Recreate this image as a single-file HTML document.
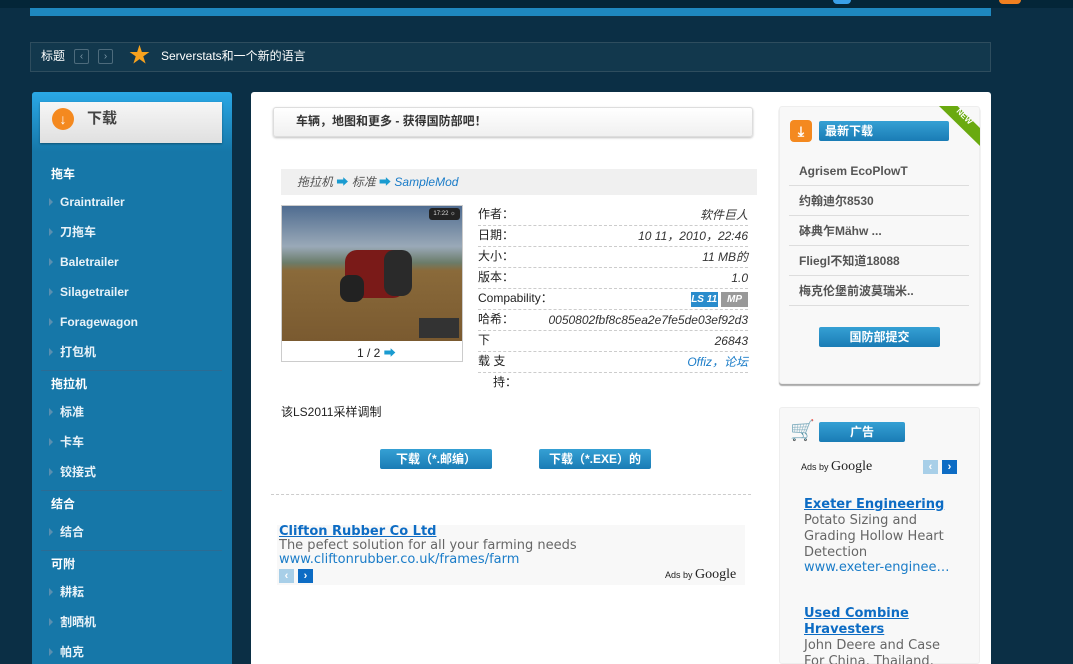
<!DOCTYPE html>
<html><head><meta charset="utf-8"><style>
*{margin:0;padding:0;box-sizing:border-box}
html,body{width:1073px;height:664px;overflow:hidden}
body{background:#0b2f45;font-family:"Liberation Sans","Noto Sans CJK SC",sans-serif;position:relative}
.a{position:absolute}
.mi{position:absolute;left:60px;color:#e8f2f8;font-size:12px;font-weight:bold;line-height:14px}
.mi:before{content:"";position:absolute;left:-11px;top:3px;border-left:4px solid #5a8fb0;border-top:4px solid transparent;border-bottom:4px solid transparent}
.mh{position:absolute;left:51px;color:#fff;font-size:12px;font-weight:bold;line-height:14px}
.sep{position:absolute;left:41px;width:181px;height:1px;background:#2b6c94}
.row{position:absolute;left:478px;width:270px;height:21px;border-bottom:1px dashed #ccc;font-size:12px;color:#222}
.row span{position:absolute;right:0;top:3px;font-style:italic;color:#333;line-height:14px;white-space:nowrap}
.row b{font-weight:normal;position:absolute;left:0;top:2px;line-height:14px}
.btn{position:absolute;height:20px;background:linear-gradient(#35a0d4,#1a7cb5);border-radius:2px;color:#fff;font-weight:bold;font-size:12px;text-align:center;line-height:20px}
.li{position:absolute;left:789px;width:180px;height:30px;border-bottom:1px solid #ddd;font-size:12px;font-weight:bold;color:#555;padding:8px 0 0 10px;line-height:14px}
</style></head><body>
<div class="a" style="left:0;top:0;width:1073px;height:8px;background:#042638"></div>
<div class="a" style="left:30px;top:8px;width:961px;height:8px;background:#1e88bf"></div>
<div class="a" style="left:833px;top:0;width:18px;height:4px;border-radius:0 0 9px 9px;background:#3aa0e8"></div>
<div class="a" style="left:999px;top:0;width:22px;height:4px;border-radius:0 0 8px 8px;background:#f08020"></div>

<div class="a" style="left:30px;top:42px;width:961px;height:30px;border:1px solid #2e4d5e;background:#12384d"></div>
<div class="a" style="left:41px;top:49px;color:#fff;font-size:12px;line-height:14px">标题</div>
<div class="a" style="left:74px;top:49px;width:15px;height:15px;border:1px solid #4d6b7c;border-radius:2px;color:#7d98a8;font-size:10px;text-align:center;line-height:13px">‹</div>
<div class="a" style="left:98px;top:49px;width:15px;height:15px;border:1px solid #4d6b7c;border-radius:2px;color:#7d98a8;font-size:10px;text-align:center;line-height:13px">›</div>
<div class="a" style="left:129px;top:44px;color:#f7a21e;font-size:21px;line-height:24px">★</div>
<div class="a" style="left:161px;top:49px;color:#fff;font-size:12px;line-height:14px">Serverstats和一个新的语言</div>

<div class="a" style="left:32px;top:92px;width:200px;height:572px;background:#1677a8;border-radius:3px 3px 0 0"></div>
<div class="a" style="left:32px;top:92px;width:200px;height:60px;background:linear-gradient(#2aa8e6,#1677a8);border-radius:3px 3px 0 0"></div>
<div class="a" style="left:40px;top:102px;width:182px;height:41px;background:linear-gradient(#f6f6f6,#e0e0e0);box-shadow:0 1px 2px rgba(0,0,0,.35)"></div>
<div class="a" style="left:52px;top:108px;width:22px;height:22px;border-radius:50%;background:#f4891f;color:#fff;font-size:14px;font-weight:bold;text-align:center;line-height:22px">↓</div>
<div class="a" style="left:87px;top:110px;color:#444;font-size:15px;font-weight:bold;line-height:18px">下载</div>

<div class="mh" style="top:167px">拖车</div>
<div class="mi" style="top:195px">Graintrailer</div>
<div class="mi" style="top:225px">刀拖车</div>
<div class="mi" style="top:255px">Baletrailer</div>
<div class="mi" style="top:285px">Silagetrailer</div>
<div class="mi" style="top:315px">Foragewagon</div>
<div class="mi" style="top:345px">打包机</div>
<div class="sep" style="top:370px"></div>
<div class="mh" style="top:377px">拖拉机</div>
<div class="mi" style="top:405px">标准</div>
<div class="mi" style="top:435px">卡车</div>
<div class="mi" style="top:465px">铰接式</div>
<div class="sep" style="top:490px"></div>
<div class="mh" style="top:497px">结合</div>
<div class="mi" style="top:525px">结合</div>
<div class="sep" style="top:550px"></div>
<div class="mh" style="top:557px">可附</div>
<div class="mi" style="top:585px">耕耘</div>
<div class="mi" style="top:615px">割晒机</div>
<div class="mi" style="top:645px">帕克</div>

<div class="a" style="left:251px;top:92px;width:740px;height:572px;background:#fff;border-radius:3px 3px 0 0"></div>
<div class="a" style="left:273px;top:107px;width:480px;height:30px;background:linear-gradient(#fff,#f0f0f0);border:1px solid #ddd;box-shadow:0 1px 2px rgba(0,0,0,.25);border-radius:3px"></div>
<div class="a" style="left:296px;top:114px;font-size:12px;font-weight:bold;color:#333;line-height:14px">车辆，地图和更多 - 获得国防部吧！</div>

<div class="a" style="left:281px;top:169px;width:476px;height:26px;background:#f0f0f0"></div>
<div class="a" style="left:297px;top:175px;font-size:12px;font-style:italic;color:#555;line-height:14px">拖拉机 <span style="color:#1a9bd0;font-style:normal">➡</span> 标准 <span style="color:#1a9bd0;font-style:normal">➡</span> <span style="color:#1a7cc8">SampleMod</span></div>

<div class="a" style="left:281px;top:205px;width:182px;height:157px;border:1px solid #ccc;background:#fff"></div>
<div class="a" style="left:282px;top:206px;width:180px;height:135px;background:linear-gradient(#4f6c90 0%,#9aa9b8 30%,#6b7c6a 42%,#8a6a3a 48%,#7a5a30 100%)"></div>
<div class="a" style="left:345px;top:250px;width:60px;height:48px;background:#7a1a18;border-radius:12px"></div>
<div class="a" style="left:340px;top:275px;width:24px;height:27px;background:#222;border-radius:9px"></div>
<div class="a" style="left:384px;top:250px;width:28px;height:46px;background:#2a2a2a;border-radius:10px"></div>
<div class="a" style="left:429px;top:208px;width:31px;height:12px;background:#222;border-radius:3px;color:#ddd;font-size:6px;line-height:12px;text-align:center">17:22 ☼</div>
<div class="a" style="left:419px;top:318px;width:40px;height:20px;background:#333"></div>
<div class="a" style="left:357px;top:346px;font-size:12px;color:#222;line-height:14px">1 / 2 <span style="color:#1a9bd0">➡</span></div>

<div class="row" style="top:205px"><b>作者：</b><span>软件巨人</span></div>
<div class="row" style="top:226px"><b>日期：</b><span>10 11，2010，22:46</span></div>
<div class="row" style="top:247px"><b>大小：</b><span>11 MB的</span></div>
<div class="row" style="top:268px"><b>版本：</b><span>1.0</span></div>
<div class="row" style="top:289px"><b>Compability：</b><span style="top:2px;font-style:normal"><i style="display:inline-block;width:27px;height:15px;background:#2a8ccc;color:#fff;font-size:10px;font-weight:bold;text-align:center;line-height:15px">LS 11</i> <i style="display:inline-block;width:27px;height:15px;background:#999;color:#fff;font-size:10px;font-weight:bold;text-align:center;line-height:15px">MP</i></span></div>
<div class="row" style="top:310px"><b>哈希：</b><span>0050802fbf8c85ea2e7fe5de03ef92d3</span></div>
<div class="row" style="top:331px"><b>下</b><span>26843</span></div>
<div class="row" style="top:352px"><b>载 支</b><span style="color:#1a7cc8">Offiz，论坛</span></div>
<div class="a" style="left:493px;top:375px;font-size:12px;color:#222;line-height:14px">持：</div>

<div class="a" style="left:281px;top:405px;font-size:12px;color:#222;line-height:14px">该LS2011采样调制</div>
<div class="btn" style="left:380px;top:449px;width:112px">下载（*.邮编）</div>
<div class="btn" style="left:539px;top:449px;width:112px">下载（*.EXE）的</div>
<div class="a" style="left:271px;top:494px;width:480px;border-top:1px dashed #ccc"></div>

<div class="a" style="left:277px;top:525px;width:468px;height:60px;background:#f8f8f8"></div>
<div class="a" style="left:279px;top:525px;font-family:'DejaVu Sans',sans-serif;font-size:13px;line-height:14px;color:#666">
<div style="color:#0d6cc4;font-weight:bold;text-decoration:underline">Clifton Rubber Co Ltd</div>
<div>The pefect solution for all your farming needs</div>
<div style="color:#1a7cc8">www.cliftonrubber.co.uk/frames/farm</div></div>
<div class="a" style="left:279px;top:569px;width:15px;height:14px;background:#a8cfe8;color:#fff;font-size:11px;text-align:center;line-height:14px;font-weight:bold">‹</div>
<div class="a" style="left:298px;top:569px;width:15px;height:14px;background:#0d6cc4;color:#fff;font-size:11px;text-align:center;line-height:14px;font-weight:bold">›</div>
<div class="a" style="left:665px;top:567px;font-size:9px;color:#222">Ads by <span style="font-family:'Liberation Serif',serif;font-size:14px">Google</span></div>

<div class="a" style="left:779px;top:106px;width:201px;height:278px;background:#f8f8f8;border:1px solid #eee;border-radius:3px;box-shadow:0 2px 1px #aaa"></div>
<div class="a" style="left:939px;top:106px;width:41px;height:40px;background:#6aaa10;clip-path:polygon(0 0,45% 0,100% 55%,100% 100%)"></div>
<div class="a" style="left:955px;top:112px;color:#fff;font-size:8px;font-weight:bold;transform:rotate(45deg)">NEW</div>
<div class="a" style="left:790px;top:120px;width:22px;height:22px;background:#f4891f;border-radius:4px;color:#fff;text-align:center;font-size:14px;font-weight:bold;line-height:22px">⤓</div>
<div class="btn" style="left:819px;top:121px;width:130px;text-align:left;padding-left:6px">最新下载</div>
<div class="li" style="top:156px">Agrisem EcoPlowT</div>
<div class="li" style="top:186px">约翰迪尔8530</div>
<div class="li" style="top:216px">砵典乍Mähw ...</div>
<div class="li" style="top:246px">Fliegl不知道18088</div>
<div class="li" style="top:276px">梅克伦堡前波莫瑞米..</div>
<div class="btn" style="left:819px;top:327px;width:121px">国防部提交</div>

<div class="a" style="left:779px;top:407px;width:201px;height:257px;background:#f8f8f8;border:1px solid #eee;border-radius:3px"></div>
<div class="a" style="left:790px;top:420px;width:22px;height:22px;color:#2a9ce8;font-size:20px;line-height:22px">🛒</div>
<div class="btn" style="left:819px;top:422px;width:86px">广告</div>
<div class="a" style="left:801px;top:459px;font-size:9px;color:#222">Ads by <span style="font-family:'Liberation Serif',serif;font-size:14px">Google</span></div>
<div class="a" style="left:923px;top:460px;width:15px;height:14px;background:#a8cfe8;color:#fff;font-size:11px;text-align:center;line-height:14px;font-weight:bold">‹</div>
<div class="a" style="left:942px;top:460px;width:15px;height:14px;background:#0d6cc4;color:#fff;font-size:11px;text-align:center;line-height:14px;font-weight:bold">›</div>
<div class="a" style="left:804px;top:497px;width:150px;font-family:'DejaVu Sans',sans-serif;font-size:13px;line-height:16px;color:#666">
<div style="color:#0d6cc4;font-weight:bold;text-decoration:underline">Exeter Engineering</div>
<div>Potato Sizing and Grading Hollow Heart Detection</div>
<div style="color:#1a7cc8;white-space:nowrap;overflow:hidden;text-overflow:ellipsis;line-height:13px">www.exeter-engineering.co.uk</div>
<div style="height:32px"></div>
<div style="color:#0d6cc4;font-weight:bold;text-decoration:underline">Used Combine Hravesters</div>
<div>John Deere and Case For China, Thailand,</div>
</div>
</body></html>
